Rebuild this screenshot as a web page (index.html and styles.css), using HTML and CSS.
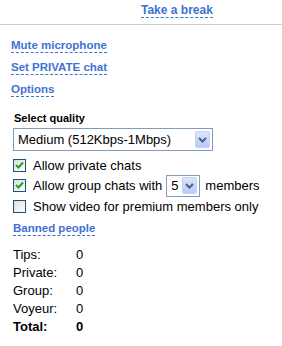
FILE: index.html
```html
<!DOCTYPE html>
<html>
<head>
<meta charset="utf-8">
<link rel="stylesheet" href="styles.css">
</head>
<body>
<div class="top">
  <a class="link big" href="#">Take a break</a>
</div>
<div class="panel">
  <div class="links">
    <a class="link" href="#">Mute microphone</a>
    <a class="link" href="#">Set PRIVATE chat</a>
    <a class="link" href="#">Options</a>
  </div>
  <div class="label">Select quality</div>
  <div class="select wide">
    <span class="val">Medium (512Kbps-1Mbps)</span>
    <span class="btn"><svg width="9" height="6" viewBox="0 0 9 6"><path d="M1 1 L4.5 4.5 L8 1" fill="none" stroke="#4d6185" stroke-width="2"/></svg></span>
  </div>
  <div class="opts">
    <div class="opt"><span class="cb"><svg width="11" height="11" viewBox="0 0 11 11"><path d="M2 5 L4.5 7.5 L9 2.5" fill="none" stroke="#21a121" stroke-width="2"/></svg></span><span>Allow private chats</span></div>
    <div class="opt"><span class="cb"><svg width="11" height="11" viewBox="0 0 11 11"><path d="M2 5 L4.5 7.5 L9 2.5" fill="none" stroke="#21a121" stroke-width="2"/></svg></span><span>Allow group chats with</span>
      <span class="select small"><span class="val">5</span><span class="btn"><svg width="9" height="6" viewBox="0 0 9 6"><path d="M1 1 L4.5 4.5 L8 1" fill="none" stroke="#4d6185" stroke-width="2"/></svg></span></span>
      <span>members</span></div>
    <div class="opt"><span class="cb"></span><span>Show video for premium members only</span></div>
  </div>
  <a class="link" href="#">Banned people</a>
  <table class="stats">
    <tr><td>Tips:</td><td>0</td></tr>
    <tr><td>Private:</td><td>0</td></tr>
    <tr><td>Group:</td><td>0</td></tr>
    <tr><td>Voyeur:</td><td>0</td></tr>
    <tr class="total"><td>Total:</td><td>0</td></tr>
  </table>
</div>
</body>
</html>
```
FILE: styles.css
```css
html, body {
  margin: 0;
  padding: 0;
  background: #fff;
  font-family: "Liberation Sans", Arial, sans-serif;
  color: #000;
}
.top {
  height: 24px;
  border-bottom: 1px solid #cfcfcf;
  padding-left: 141px;
  box-sizing: content-box;
}
.link {
  display: inline-block;
  color: #3f72d4;
  font-size: 11.5px;
  font-weight: bold;
  text-decoration: none;
  line-height: 13px;
  border-bottom: 1px dashed #3f72d4;
}
.link.big {
  font-size: 12px;
  margin-top: 2px;
  line-height: 13px;
}
.panel {
  padding: 14px 0 0 11px;
}
.links {
  display: flex;
  flex-direction: column;
  align-items: flex-start;
  gap: 8px;
}
.label {
  font-size: 11px;
  font-weight: bold;
  margin: 15px 0 0 3px;
  line-height: 13px;
}
.select {
  display: inline-flex;
  align-items: center;
  border: 1px solid #7f9db9;
  background: #fff;
  box-sizing: border-box;
  font-size: 13px;
}
.select.wide {
  width: 200px;
  height: 23px;
  margin: 3px 0 0 2px;
  padding: 0 2px 0 4px;
  justify-content: space-between;
  display: flex;
}
.select .btn {
  width: 15px;
  height: 17px;
  background: linear-gradient(#dbe5fc, #b7cbf7);
  border: 1px solid #c3d3f7;
  box-sizing: border-box;
  border-radius: 2px;
  display: flex;
  align-items: center;
  justify-content: center;
}
.select.small {
  height: 22px;
  width: 34px;
  padding: 0 1px 0 4px;
  gap: 3px;
  margin: 0 5px 0 4px;
}
.opts {
  margin: 4px 0 0 2px;
  display: flex;
  flex-direction: column;
}
.opt {
  display: flex;
  align-items: center;
  font-size: 13px;
  height: 20px;
}
.opt:nth-child(2) {
  height: 21px;
}
.cb {
  width: 13px;
  height: 13px;
  border: 1px solid #1c5180;
  box-sizing: border-box;
  background: linear-gradient(135deg, #dcdcd7, #fff);
  margin-right: 7px;
  display: inline-flex;
  align-items: center;
  justify-content: center;
}
.cb svg { display: block; }
.opts + .link {
  margin-top: 6px;
  margin-left: 2px;
}
.stats {
  border-collapse: collapse;
  margin: 10px 0 0 2px;
  font-size: 13px;
}
.stats td {
  padding: 0;
  height: 18px;
  line-height: 18px;
}
.stats td:first-child {
  width: 63px;
}
.stats .total td {
  font-weight: bold;
}
```
